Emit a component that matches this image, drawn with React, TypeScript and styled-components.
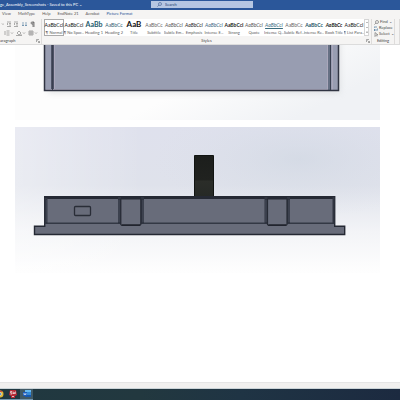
import React from "react";
import styled, { createGlobalStyle } from "styled-components";

const Global = createGlobalStyle`
  * { box-sizing: border-box; }
  body { margin: 0; background: #fff; font-family: Lato, "Open Sans", sans-serif; font-size: 4px; line-height: 6px; color: #444; }
  button, input { font: inherit; color: inherit; border: 0; padding: 0; margin: 0; background: none; }
  svg { display: block; }
`;

const Window = styled.div`
  display: flex;
  flex-direction: column;
  min-height: 100vh;
  overflow: hidden;
`;

const TitleBar = styled.header`
  display: grid;
  grid-template-columns: 151px minmax(0, 102fr) minmax(0, 147fr);
  height: 10px;
  background: #2b579a;
  color: #fff;
`;

const FileTitle = styled.div`
  padding-top: 2px;
  white-space: nowrap;
`;

const Search = styled.label`
  display: flex;
  align-items: center;
  gap: 3px;
  height: 7px;
  margin-top: 1px;
  padding-left: 6px;
  background: #b5c6e2;
  color: #1f3d70;
`;

const SearchInput = styled.input`
  flex: 1;
  min-width: 0;
  height: 6px;
  outline: none;
  &::placeholder { color: #1f3d70; opacity: 1; }
`;

const Tabs = styled.nav`
  display: flex;
  gap: 7px;
  height: 9px;
  padding: 1px 0 0 2px;
  background: #f5f4f3;
`;

const Tab = styled.button<{ $active?: boolean }>`
  white-space: nowrap;
  height: 6px;
  color: ${(p) => (p.$active ? "#2b5797" : "#555")};
`;

const Ribbon = styled.div`
  display: flex;
  height: 26px;
  background: #f5f4f3;
  border-bottom: 1px solid #dcdcdc;
`;

const Group = styled.section<{ $width?: number }>`
  display: flex;
  flex-direction: column;
  justify-content: space-between;
  ${(p) => (p.$width ? `width: ${p.$width}px; flex: none;` : "flex: 1; min-width: 0;")}
  border-right: 1px solid #dedcdb;
`;

const GroupLabel = styled.div<{ $start?: boolean }>`
  display: flex;
  justify-content: ${(p) => (p.$start ? "flex-start" : "center")};
  position: relative;
  height: 6px;
`;

const Launcher = styled.svg`
  position: absolute;
  right: 1px;
  top: 1px;
`;

const Gallery = styled.div`
  display: flex;
  height: 17px;
  margin: 0 2px 0 2px;
  background: #fff;
`;

const StyleCard = styled.button<{ $selected?: boolean }>`
  display: flex;
  flex: 1 1 0;
  min-width: 0;
  flex-direction: column;
  align-items: center;
  justify-content: space-between;
  overflow: hidden;
  white-space: nowrap;
  ${(p) => p.$selected && "box-shadow: inset 0 0 0 1px #aaa;"}
`;

const Sample = styled.span<{ $tone: string; $big?: number; $bold?: boolean; $italic?: boolean; $line?: boolean }>`
  display: block;
  height: 10px;
  line-height: ${(p) => (p.$big ? 11 : 13)}px;
  font-size: ${(p) => p.$big ?? 5}px;
  color: ${(p) => p.$tone};
  font-weight: ${(p) => (p.$bold ? 700 : 400)};
  font-style: ${(p) => (p.$italic ? "italic" : "normal")};
  ${(p) => p.$line && "text-decoration: underline;"}
`;

const StyleName = styled.span`
  height: 7px;
  line-height: 7px;
  color: #5a5a5a;
`;

const GalleryScroll = styled.div`
  display: flex;
  flex-direction: column;
  width: 5px;
  border: 1px solid #d5d5d5;
`;

const ScrollButton = styled.button`
  display: grid;
  flex: 1;
  place-items: center;
`;

const ToolGrid = styled.div`
  display: flex;
  flex-direction: column;
  gap: 3px;
  padding-top: 2px;
`;

const ToolRow = styled.div<{ $wide?: boolean }>`
  display: flex;
  justify-content: flex-end;
  gap: ${(p) => (p.$wide ? 2 : 1)}px;
  padding-right: ${(p) => (p.$wide ? 3 : 5)}px;
`;

const Tool = styled.button`
  display: block;
  height: 6px;
`;

const EditList = styled.div`
  display: flex;
  flex-direction: column;
  padding-left: 2px;
`;

const EditButton = styled.button`
  display: flex;
  align-items: center;
  gap: 1px;
  height: 6px;
  white-space: nowrap;
`;

const Page = styled.main`
  display: flex;
  flex: 1;
  flex-direction: column;
  gap: 7px;
  padding: 0 20px 0 15px;
  background: #fff;
`;

const Drawing = styled.svg`
  width: 100%;
  height: auto;
`;

const Status = styled.div`
  height: 7px;
  background: #f1f0ef;
  border-top: 1px solid #e5e5e5;
  border-bottom: 1px solid #cbd4d8;
`;

const Taskbar = styled.footer`
  display: flex;
  height: 11px;
  background: linear-gradient(90deg, #203840, #22383f 35%, #1f3444 60%, #1c2a40);
`;

const TaskButton = styled.button<{ $width: number; $active?: boolean }>`
  display: flex;
  justify-content: center;
  width: ${(p) => p.$width}px;
  padding-top: 1px;
  background: ${(p) => (p.$active ? "#405965" : "transparent")};
  border-bottom: 1px solid #7496ad;
`;

type Item = { name: string; tone: string; text?: string; big?: number; bold?: boolean; italic?: boolean; line?: boolean; selected?: boolean };
const styles: Item[] = [
  { name: "¶ Normal", tone: "#111", selected: true },
  { name: "¶ No Spac...", tone: "#111" },
  { name: "Heading 1", tone: "#245a6b", text: "AaBb", big: 7, bold: true },
  { name: "Heading 2", tone: "#2f6072", text: "AaBbCc" },
  { name: "Title", tone: "#111", text: "AaB", big: 8, bold: true },
  { name: "Subtitle", tone: "#666", text: "AaBbCc" },
  { name: "Subtle Em...", tone: "#555", italic: true },
  { name: "Emphasis", tone: "#222", italic: true },
  { name: "Intense E...", tone: "#3b6680", italic: true },
  { name: "Strong", tone: "#222", bold: true },
  { name: "Quote", tone: "#555", italic: true },
  { name: "Intense Q...", tone: "#3a6c7e", italic: true, line: true },
  { name: "Subtle Ref...", tone: "#666", text: "AaBbCc" },
  { name: "Intense Re...", tone: "#205566", text: "AaBbCc", bold: true },
  { name: "Book Title", tone: "#222", text: "AaBbCc", bold: true, italic: true },
  { name: "¶ List Para...", tone: "#111" },
];

const SearchIcon = ({ color = "#3d5d90" }: { color?: string }) => (
  <svg width="5" height="5" viewBox="0 0 5 5" fill="none" stroke={color} strokeWidth=".6" aria-hidden="true">
    <circle cx="3" cy="2" r="1.5" /><path d="M2 3 .4 4.6" />
  </svg>
);

const toolRows = [
  [
    { name: "Multilevel list", d: "M5 2.500l1 1 1-1" },
    { name: "Decrease indent", d: "M2 1h4M4 2.500h2M4 4h2M2 5.500h4M3 2L2 3l1 1" },
    { name: "Increase indent", d: "M1 1h4M3 2.500h2M3 4h2M1 5.500h4M1 2l1 1-1 1" },
    { name: "Sort", d: "M2 1v4M5 1v4M1 4l1 1 1-1M4 4l1 1 1-1", tone: "#47759b" },
    { name: "Show paragraph marks", d: "M5 1H3a1 1 0 0 0 0 2h1M4 1v5M5 1v5", tone: "#333" },
  ],
  [
    { name: "Line spacing", d: "M1 1v4M2.500 1h3M2.500 3h3M2.500 5h3M7 2.500l1 1 1-1" },
    { name: "Shading", d: "M1 3l2-2 2 2-2 2zM5 4v1M0 5.500h6M7 2.500l1 1 1-1" },
    { name: "Borders", d: "M1 1h4v4H1zM3 1v4M1 3h4M7 2.500l1 1 1-1" },
  ],
];

function LauncherIcon() {
  return (
    <Launcher width="4" height="4" viewBox="0 0 4 4" fill="none" stroke="#777" strokeWidth=".6" aria-hidden="true">
      <path d="M.5 3V.5H3M1.5 1.5l2 2M3.5 2v1.5H2" />
    </Launcher>
  );
}

function TopView() {
  return (
    <Drawing viewBox="0 0 365 75" role="img" aria-label="Enclosure top view">
      <defs>
        <linearGradient id="topBack" x1="0" y1="0" x2="1" y2=".4">
          <stop offset=".6" stopColor="#fdfdfd" /><stop offset="1" stopColor="#f0f2f5" />
        </linearGradient>
        <filter id="softEdge" x="-10%" y="-20%" width="120%" height="150%"><feGaussianBlur stdDeviation="3" /></filter>
      </defs>
      <path fill="url(#topBack)" d="M0 0h365v75H0z" />
      <path fill="#cfd1d4" opacity=".6" filter="url(#softEdge)" d="M33-10h292v58H33z" />
      <path fill="#989db1" d="M29-2h294v48H29z" />
      <path fill="#4d5366" d="M36-2h3v48h-3z" />
      <path fill="#667084" d="M313-2h3v48h-3z" />
      <path stroke="#aaa7bb" d="M39.5-1v46M31 44.500h281M312.500-1v46M317.500-1v46" />
      <path fill="none" stroke="#303442" strokeWidth="1.5" d="M29.500-2v47.500h294V-2" />
      <path stroke="#3a3f50" d="M37.500-1v46M315.500-1v46" />
    </Drawing>
  );
}

function SideView() {
  return (
    <Drawing viewBox="0 0 365 146" role="img" aria-label="Enclosure side view">
      <defs>
        <linearGradient id="sky" x1="0" y1="0" x2="0" y2="1">
          <stop stopColor="#dfe1ed" /><stop offset=".4" stopColor="#dfe2eb" /><stop offset=".72" stopColor="#f3f4f7" /><stop offset="1" stopColor="#fefefe" />
        </linearGradient>
        <linearGradient id="leftLight"><stop stopColor="#fff" stopOpacity=".35" /><stop offset=".35" stopColor="#fff" stopOpacity="0" /></linearGradient>
        <radialGradient id="rightShade" cx=".78" cy=".22" r=".4"><stop stopColor="#cbd4df" stopOpacity=".5" /><stop offset="1" stopColor="#d8dde7" stopOpacity="0" /></radialGradient>
        <linearGradient id="post" x1="0" y1="0" x2="0" y2="1"><stop stopColor="#1c1e1c" /><stop offset=".58" stopColor="#20221f" /><stop offset=".62" stopColor="#2b2d29" /><stop offset="1" stopColor="#262926" /></linearGradient>
      </defs>
      <path fill="url(#sky)" d="M0 0h365v146H0z" />
      <path fill="url(#leftLight)" d="M0 0h365v146H0z" />
      <path fill="url(#rightShade)" d="M0 0h365v146H0z" />
      <path fill="url(#post)" stroke="#111412" d="M179.500 28.500h19V70h-19z" />
      <path fill="#686c7a" stroke="#242833" strokeWidth="1.4" d="M29.700 69.700h290v29.500h10v8.300H19.500v-8.300h10.200z" />
      <path fill="#252934" d="M30 69h289v3H30z" />
      <path stroke="#333844" strokeWidth="1.5" d="M31 96.200h288" />
      <path stroke="#303541" strokeWidth="3" d="M31 71v26M104.500 70v27M127.500 70v27M251 70v27M273.500 70v27" />
      <path stroke="#303541" strokeWidth="2" d="M318.500 70v27" />
      <path stroke="#555a69" strokeWidth=".7" d="M32 73v22M104 73v22M128 73v22M251 73v22M274 73v22" />
      <path fill="#686c7a" stroke="#262a34" strokeWidth="1.2" d="M105.800 72h20v25.500l-1 1h-18l-1-1zM252.500 72h19.500v25.500l-1 1h-17.500l-1-1z" />
      <path stroke="#20232c" strokeWidth="1.5" d="M107 98h18M253.500 98H271" />
      <rect x="59.5" y="79.5" width="16" height="9" rx="1" fill="#686c7a" stroke="#292d37" strokeWidth="1.3" />
    </Drawing>
  );
}

export default function App() {
  return (
    <>
      <Global />
      <Window>
        <TitleBar>
          <FileTitle>ge_Assembly_Screenshots - Saved to this PC ⌄</FileTitle>
          <Search><SearchIcon /><SearchInput aria-label="Search" placeholder="Search" /></Search>
        </TitleBar>
        <Tabs>
          {["View", "MathType", "Help", "EndNote 21", "Acrobat", "Picture Format"].map((t) => (
            <Tab key={t} $active={t === "Picture Format"}>{t}</Tab>
          ))}
        </Tabs>
        <Ribbon>
          <Group $width={42}>
            <ToolGrid>
              {toolRows.map((row, i) => (
                <ToolRow key={i} $wide={i === 1}>
                  {row.map((tool) => (
                    <Tool key={tool.name} aria-label={tool.name}>
                      <svg width={i ? 10 : 7} height="6" viewBox={i ? "0 0 10 6" : "0 0 7 6"} fill="none" stroke={tool.tone ?? "#777"} strokeWidth=".6"><path d={tool.d} /></svg>
                    </Tool>
                  ))}
                </ToolRow>
              ))}
            </ToolGrid>
            <GroupLabel $start>aragraph<LauncherIcon /></GroupLabel>
          </Group>
          <Group>
            <Gallery>
              {styles.map((s) => (
                <StyleCard key={s.name} $selected={s.selected}>
                  <Sample $tone={s.tone} $big={s.big} $bold={s.bold} $italic={s.italic} $line={s.line}>{s.text ?? "AaBbCcI"}</Sample>
                  <StyleName>{s.name}</StyleName>
                </StyleCard>
              ))}
              <GalleryScroll>
                {["M0 2l1-1 1 1", "M0 1l1 1 1-1", "M0 0h2M0 1l1 1 1-1"].map((d, i) => (
                  <ScrollButton key={d} aria-label={["Scroll up", "Scroll down", "More styles"][i]}>
                    <svg width="2" height="3" viewBox="0 0 2 3" fill="none" stroke="#777" strokeWidth=".5"><path d={d} /></svg>
                  </ScrollButton>
                ))}
              </GalleryScroll>
            </Gallery>
            <GroupLabel>Styles<LauncherIcon /></GroupLabel>
          </Group>
          <Group $width={23}>
            <EditList>
              <EditButton><SearchIcon color="#666" />Find ⌄</EditButton>
              <EditButton>
                <svg width="4" height="5" viewBox="0 0 4 5" fill="none" stroke="#47759b" strokeWidth=".7"><path d="M0 2V1h3M0 4h4V2M1 3l-1 1 1 1" /></svg>Replace
              </EditButton>
              <EditButton>
                <svg width="4" height="5" viewBox="0 0 4 5" fill="none" stroke="#666" strokeWidth=".6"><path d="M1 .5v4l1-1 1 1M1 .5l3 2.500H2" /></svg>Select ⌄
              </EditButton>
            </EditList>
            <GroupLabel>Editing</GroupLabel>
          </Group>
          <Group $width={5} />
        </Ribbon>
        <Page>
          <TopView />
          <SideView />
        </Page>
        <Status />
        <Taskbar>
          <TaskButton $width={5} aria-label="Chrome">
            <svg width="5" height="8" viewBox="4 0 5 8"><circle cx="4" cy="4" r="3.500" fill="#e2b72f" /><path fill="#4a9b54" d="M4 4v4a4 4 0 0 1-4-4z" /><path fill="#cf4b3c" d="M4 .5a3.500 3.500 0 0 1 3 1.500H4z" /><circle cx="4" cy="4" r="1.500" fill="#4684c4" stroke="#eee" strokeWidth=".6" /></svg>
          </TaskButton>
          <TaskButton $width={15} aria-label="SolidWorks">
            <svg width="8" height="8" viewBox="0 0 8 8"><path fill="#b72935" d="M1 0h6l1 5-2 1v2H2V6L0 5z" /><path fill="none" stroke="#f0dada" strokeWidth=".8" d="M3 1.500H1.500v1.300H3V4H1.500M4 1.500l.5 2.500.8-1.500L6 4l.5-2.500" /><path fill="#dfc6c8" d="M3 6h2v1H3z" /></svg>
          </TaskButton>
          <TaskButton $width={13} $active aria-label="Word">
            <svg width="8" height="8" viewBox="0 0 8 8"><path fill="#68b9ed" d="M2 0h6v3H2z" /><path fill="#328bd9" d="M2 2h6v3H2z" /><path fill="#1758ac" d="M2 5h6v2H2z" /><path fill="#1b5cbd" d="M0 2h4v4H0z" /><path fill="none" stroke="#fff" strokeWidth=".5" d="M.8 3l.5 2L2 3.500 2.700 5l.5-2" /></svg>
          </TaskButton>
        </Taskbar>
      </Window>
    </>
  );
}
